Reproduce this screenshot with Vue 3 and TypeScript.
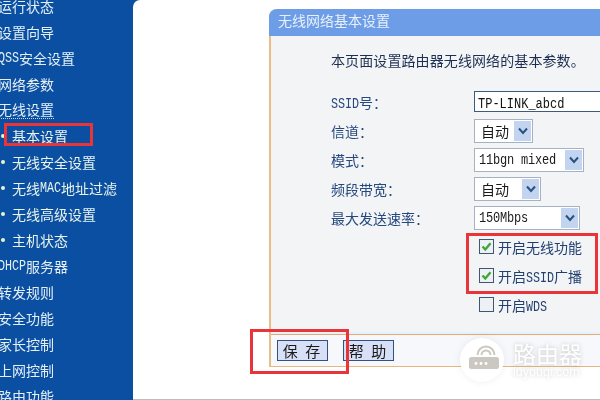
<template>
  <div class="page">
    <nav class="sidebar">
      <div
        v-for="item in menu"
        :key="item.text"
        class="menu-item"
        :class="{ sub: item.sub, underlined: item.text === '无线设置' }"
      >
        <span v-if="item.sub" class="bullet"></span>
        <template v-for="part in splitLatin(item.text)" :key="part.text">
          <span :class="{ latin: part.latin }">{{ part.text }}</span>
        </template>
      </div>
    </nav>

    <main class="content">
      <section class="panel">
        <h1 class="panel-title">无线网络基本设置</h1>
        <div class="panel-body">
          <p class="intro">本页面设置路由器无线网络的基本参数。</p>
          <div class="form">
            <label><span class="latin">SSID</span>号：</label>
            <div class="text-input"><span class="latin">TP-LINK_abcd</span></div>

            <label>信道：</label>
            <div class="select" style="width: 59px"><span class="cjk">自动</span><i class="arrow"><svg viewBox="0 0 10 8"><path d="M1 1.5 5 6 9 1.5" /></svg></i></div>

            <label>模式：</label>
            <div class="select" style="width: 110px"><span class="latin mono">11bgn mixed</span><i class="arrow"><svg viewBox="0 0 10 8"><path d="M1 1.5 5 6 9 1.5" /></svg></i></div>

            <label>频段带宽：</label>
            <div class="select" style="width: 67px"><span class="cjk">自动</span><i class="arrow"><svg viewBox="0 0 10 8"><path d="M1 1.5 5 6 9 1.5" /></svg></i></div>

            <label>最大发送速率：</label>
            <div class="select" style="width: 106px"><span class="latin mono">150Mbps</span><i class="arrow"><svg viewBox="0 0 10 8"><path d="M1 1.5 5 6 9 1.5" /></svg></i></div>

            <template v-for="c in checks" :key="c.label + c.latin">
              <span></span>
              <div class="check-row">
                <span class="box">
                  <svg v-if="c.on" viewBox="0 0 13 13"><path d="M2.5 6.5 5.3 9.5 10.5 3.2" /></svg>
                </span>
                <span class="check-label">开启<span class="latin">{{ c.latin }}</span>{{ c.label }}</span>
              </div>
            </template>
          </div>
        </div>
        <footer class="panel-footer">
          <button class="btn">保&nbsp;存</button>
          <button class="btn">帮&nbsp;助</button>
        </footer>
      </section>
      <div class="watermark">
        <span class="wm-circle">
          <svg viewBox="0 0 44 44" width="44" height="44">
            <path class="wm-wave" d="M17.5 17a8.5 8.5 0 0 1 17 0M21.5 17a4.5 4.5 0 0 1 9 0" />
            <rect x="9" y="19" width="30" height="12" rx="2.5" fill="#cbc8c2" />
            <circle cx="16" cy="25.5" r="1.4" fill="#fff" />
            <circle cx="21" cy="25.5" r="1.4" fill="#fff" />
            <circle cx="26" cy="25.5" r="1.4" fill="#fff" />
          </svg>
        </span>
        <span class="wm-text">
          <b>路由器</b>
          <small>luyouqi.com</small>
        </span>
      </div>
    </main>

    <div class="red-box box-menu"></div>
    <div class="red-box box-checks"></div>
    <div class="red-box box-save"></div>
    <div class="bottom-line"></div>
  </div>
</template>

<script setup lang="ts">
interface MenuItem {
  text: string
  sub?: boolean
}

const menu: MenuItem[] = [
  { text: '运行状态' },
  { text: '设置向导' },
  { text: 'QSS安全设置' },
  { text: '网络参数' },
  { text: '无线设置' },
  { text: '基本设置', sub: true },
  { text: '无线安全设置', sub: true },
  { text: '无线MAC地址过滤', sub: true },
  { text: '无线高级设置', sub: true },
  { text: '主机状态', sub: true },
  { text: 'DHCP服务器' },
  { text: '转发规则' },
  { text: '安全功能' },
  { text: '家长控制' },
  { text: '上网控制' },
  { text: '路由功能' },
]

const checks = [
  { latin: '', label: '无线功能', on: true },
  { latin: 'SSID', label: '广播', on: true },
  { latin: 'WDS', label: '', on: false },
]

function splitLatin(text: string) {
  return text
    .split(/([A-Z]+)/)
    .filter(Boolean)
    .map((t) => ({ text: t, latin: /^[A-Z]+$/.test(t) }))
}
</script>

<style scoped>
.page {
  position: relative;
  display: flex;
  width: 600px;
  height: 400px;
  overflow: hidden;
  background: #0b4fa3;
  font-family: "Noto Sans CJK SC", "Liberation Sans", sans-serif;
  filter: blur(0.3px);
}

.sidebar {
  flex: 0 0 133px;
  overflow: hidden;
  color: #e4f0f6;
  font-size: 14px;
}

.menu-item {
  display: flex;
  align-items: center;
  height: 26px;
  margin-left: -2px;
  white-space: nowrap;
  position: relative;
  top: -7px;
}

.menu-item.sub {
  margin-left: 0;
  padding-left: 12px;
  color: #e8f4ec;
}

.menu-item .latin {
  transform: translateY(1.5px) scaleY(1.22);
}

.underlined span {
  border-bottom: 1px dotted #c9d8e8;
  line-height: 17px;
}

.bullet {
  position: absolute;
  left: 1px;
  top: 11px;
  width: 4px;
  height: 4px;
  border-radius: 50%;
  background: #e6f6c8;
}

.latin {
  display: inline-block;
  font-family: "Liberation Mono", monospace;
  font-size: 11.7px;
  line-height: 1;
  transform: scaleY(1.22);
}

.content {
  flex: 1;
  position: relative;
  min-width: 0;
  padding: 9px 0 0 136px;
  background: #fff;
  border-top-left-radius: 7px;
}

.panel {
  width: 340px;
  height: 358px;
  display: flex;
  flex-direction: column;
  border-left: 2px solid #e8bd86;
  border-top-left-radius: 8px;
}

.panel-title {
  margin: 0 0 0 -2px;
  height: 27px;
  line-height: 22px;
  padding-left: 9px;
  font-size: 14px;
  font-weight: 400;
  color: #e8f1fb;
  background: #6c9de6;
  border-top-left-radius: 8px;
}

.panel-body {
  flex: 1;
  background: #f3f4f5;
  padding: 14px 0 0 60px;
  border-bottom: 1px solid #e8a873;
  box-shadow: inset 0 -2px 0 #e6f1fb;
  font-size: 14px;
}

.intro {
  margin: 0;
  line-height: 20px;
  color: #1c2f52;
  letter-spacing: 0.1px;
}

.form {
  display: grid;
  grid-template-columns: 143px 1fr;
  grid-auto-rows: 29px;
  align-items: center;
  margin-top: 17px;
  color: #25487f;
}

.text-input {
  width: 130px;
  height: 21px;
  box-sizing: border-box;
  border: 1px solid #3d5a80;
  border-right: 0;
  background: #fff;
  padding-left: 3px;
  line-height: 19px;
  color: #111;
}

.text-input .latin {
  font-size: 12px;
}

.select {
  display: flex;
  align-items: center;
  justify-content: space-between;
  box-sizing: border-box;
  height: 24px;
  border: 1px solid #a6b2c4;
  background: #fff;
  padding: 1px 1px 1px 5px;
  color: #1a1a1a;
}

.mono {
  font-size: 12px;
  margin-left: -1px;
  letter-spacing: -0.2px;
}

.cjk {
  font-size: 14px;
  margin-left: 1px;
  line-height: 1;
}

.arrow {
  display: flex;
  align-items: center;
  justify-content: center;
  width: 17px;
  height: 100%;
  background: #c2d4f0;
}

.arrow svg {
  width: 10px;
  height: 8px;
  fill: none;
  stroke: #27527f;
  stroke-width: 2;
}

.check-row {
  display: flex;
  align-items: center;
  gap: 4px;
  margin-left: 5px;
  color: #223f72;
}

.box {
  display: block;
  width: 13px;
  height: 13px;
  border: 1px solid #3f5573;
  background: #eef1f3;
}

.box svg {
  display: block;
  fill: none;
  stroke: #3fa63a;
  stroke-width: 2.4;
}

.panel-footer {
  flex: 0 0 32px;
  display: flex;
  align-items: center;
  gap: 15px;
  padding-left: 6px;
  background: #f7f8fb;
  border-bottom: 1px solid #e8b77f;
  box-sizing: border-box;
}

.btn {
  width: 51px;
  height: 21px;
  padding: 0;
  border: 1px solid #34507c;
  background: #d7e0f6;
  font-family: inherit;
  font-size: 15px;
  letter-spacing: 2px;
  line-height: 1;
  color: #1a1a1a;
}

.watermark {
  position: absolute;
  left: 327px;
  top: 338px;
  display: flex;
  gap: 9px;
}

.wm-circle {
  display: block;
  width: 44px;
  height: 44px;
  border-radius: 50%;
  background: #fff;
  box-shadow: 0 0 7px rgba(90, 90, 90, 0.1);
}

.wm-circle svg {
  display: block;
}

.wm-wave {
  fill: none;
  stroke: #cbc8c2;
  stroke-width: 2;
}

.wm-text {
  display: flex;
  flex-direction: column;
  margin-top: 4px;
  color: #fff;
  text-shadow: 0 0 4px rgba(80, 80, 80, 0.3);
}

.wm-text b {
  font-size: 23px;
  font-weight: 400;
  line-height: 22px;
}

.wm-text small {
  font: 12.5px/14px "Liberation Sans", sans-serif;
  margin-top: 1px;
}

.red-box {
  position: absolute;
  box-sizing: border-box;
  border: 3px solid #e9343a;
  pointer-events: none;
}

.box-menu {
  left: 4px;
  top: 123px;
  width: 89px;
  height: 23px;
}

.box-checks {
  left: 466px;
  top: 233px;
  width: 132px;
  height: 61px;
}

.box-save {
  left: 250px;
  top: 329px;
  width: 99px;
  height: 45px;
}

.bottom-line {
  position: absolute;
  left: 133px;
  right: 0;
  bottom: 0;
  height: 1px;
  background: #bdbdbd;
}
</style>
